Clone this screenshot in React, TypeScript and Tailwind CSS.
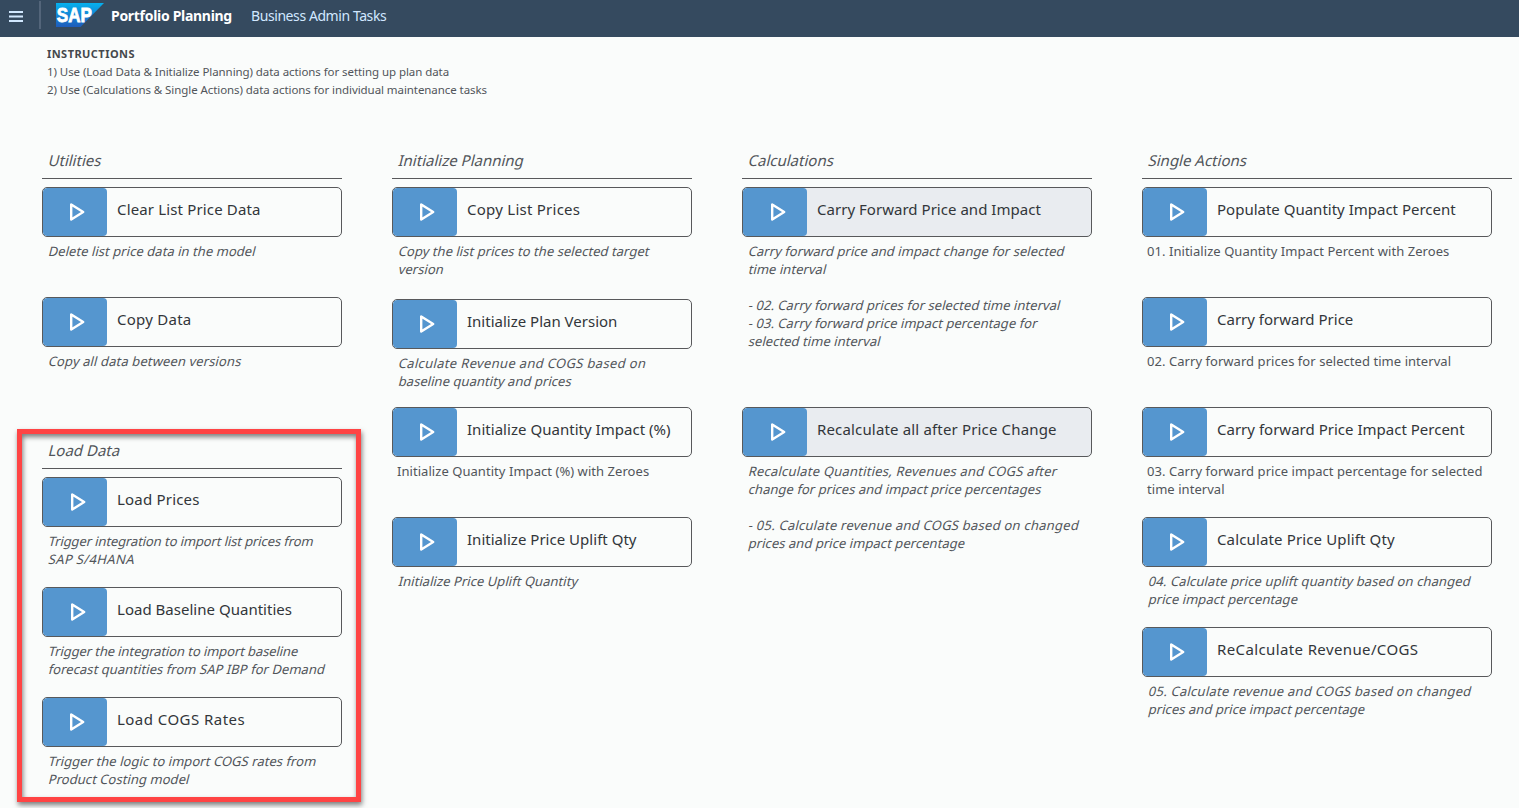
import React from "react";

type Line = string | { text: string; tracking: string };

type Action = {
  title: string;
  lines: Line[];
  height: string;
  tracking: string;
  upright?: boolean;
  active?: boolean;
  iconPad?: string;
};

const utilities: Action[] = [
  {
    title: "Clear List Price Data",
    lines: ["Delete list price data in the model"],
    height: "h-[110px]",
    tracking: "tracking-[0.15px]",
  },
  {
    title: "Copy Data",
    lines: [{ text: "Copy all data between versions", tracking: "tracking-[0.12px]" }],
    height: "h-[110px]",
    tracking: "tracking-[0.25px]",
  },
];

const loadData: Action[] = [
  {
    title: "Load Prices",
    lines: [
      { text: "Trigger integration to import list prices from", tracking: "tracking-[-0.11px]" },
      { text: "SAP S/4HANA", tracking: "tracking-[0.35px]" },
    ],
    height: "h-[110px]",
    tracking: "tracking-[0.2px]",
    iconPad: "pl-1.5",
  },
  {
    title: "Load Baseline Quantities",
    lines: [
      { text: "Trigger the integration to import baseline", tracking: "tracking-[-0.1px]" },
      "forecast quantities from SAP IBP for Demand",
    ],
    height: "h-[110px]",
    tracking: "tracking-[0.02px]",
    iconPad: "pl-1.5",
  },
  {
    title: "Load COGS Rates",
    lines: ["Trigger the logic to import COGS rates from", "Product Costing model"],
    height: "h-[110px]",
    tracking: "tracking-[0.46px]",
  },
];

const initialize: Action[] = [
  {
    title: "Copy List Prices",
    lines: ["Copy the list prices to the selected target", "version"],
    height: "h-[112px]",
    tracking: "tracking-[0.25px]",
  },
  {
    title: "Initialize Plan Version",
    lines: [
      { text: "Calculate Revenue and COGS based on", tracking: "tracking-[0.33px]" },
      "baseline quantity and prices",
    ],
    height: "h-[108px]",
    tracking: "tracking-[0px]",
  },
  {
    title: "Initialize Quantity Impact (%)",
    lines: ["Initialize Quantity Impact (%) with Zeroes"],
    height: "h-[110px]",
    tracking: "tracking-[0.03px]",
    upright: true,
  },
  {
    title: "Initialize Price Uplift Qty",
    lines: ["Initialize Price Uplift Quantity"],
    height: "h-[110px]",
    tracking: "tracking-[0.02px]",
  },
];

const calculations: Action[] = [
  {
    title: "Carry Forward Price and Impact",
    lines: [
      "Carry forward price and impact change for selected",
      "time interval",
      "",
      "- 02. Carry forward prices for selected time interval",
      "- 03. Carry forward price impact percentage for",
      "selected time interval",
    ],
    height: "h-[220px]",
    tracking: "tracking-[0.03px]",
    active: true,
    iconPad: "pl-1.5",
  },
  {
    title: "Recalculate all after Price Change",
    lines: [
      { text: "Recalculate Quantities, Revenues and COGS after", tracking: "tracking-[0.21px]" },
      "change for prices and impact price percentages",
      "",
      { text: "- 05. Calculate revenue and COGS based on changed", tracking: "tracking-[0.24px]" },
      { text: "prices and price impact percentage", tracking: "tracking-[0.05px]" },
    ],
    height: "h-[220px]",
    tracking: "tracking-[0.16px]",
    active: true,
    iconPad: "pl-1.5",
  },
];

const single: Action[] = [
  {
    title: "Populate Quantity Impact Percent",
    lines: ["01. Initialize Quantity Impact Percent with Zeroes"],
    height: "h-[110px]",
    tracking: "tracking-[0px]",
    upright: true,
  },
  {
    title: "Carry forward Price",
    lines: ["02. Carry forward prices for selected time interval"],
    height: "h-[110px]",
    tracking: "tracking-[0px]",
    upright: true,
  },
  {
    title: "Carry forward Price Impact Percent",
    lines: ["03. Carry forward price impact percentage for selected", "time interval"],
    height: "h-[110px]",
    tracking: "tracking-[0.01px]",
    upright: true,
  },
  {
    title: "Calculate Price Uplift Qty",
    lines: [
      { text: "04. Calculate price uplift quantity based on changed", tracking: "tracking-[0.11px]" },
      "price impact percentage",
    ],
    height: "h-[110px]",
    tracking: "tracking-[0.14px]",
  },
  {
    title: "ReCalculate Revenue/COGS",
    lines: [
      { text: "05. Calculate revenue and COGS based on changed", tracking: "tracking-[0.25px]" },
      "prices and price impact percentage",
    ],
    height: "h-[110px]",
    tracking: "tracking-[0.38px]",
  },
];

function PlayIcon() {
  return (
    <svg width="18" height="20" viewBox="0 0 18 20" fill="none" stroke="#fff" strokeWidth="2.4" strokeLinejoin="round">
      <path d="M3.2 2.4 V17.6 L15.2 10 Z" />
    </svg>
  );
}

function ActionItem({ action }: { action: Action }) {
  return (
    <div className={action.height}>
      <button
        className={`flex h-[50px] w-full overflow-hidden rounded-[5px] border border-[#58595b] text-left ${
          action.active ? "bg-[#e9ecf0]" : "bg-[#fafcfb]"
        }`}
      >
        <span
          className={`flex h-full w-16 shrink-0 items-center justify-center rounded-[4px] bg-[#5596cf] ${
            action.iconPad ?? "pl-1"
          }`}
        >
          <PlayIcon />
        </span>
        <span
          className={`whitespace-nowrap pl-2.5 pt-2.5 text-[15px] leading-[22px] text-[#32363a] ${action.tracking}`}
        >
          {action.title}
        </span>
      </button>
      <div className={`pt-[5px] text-[13px] leading-[18px] text-[#51555a] ${action.upright ? "pl-[5px]" : "pl-[6.5px]"}`}>
        {action.lines.map((line, i) => {
          const text = typeof line === "string" ? line : line.text;
          const tracking = typeof line === "string" ? "tracking-[0.05px]" : line.tracking;
          return (
            <p
              key={i}
              className={`h-[18px] whitespace-nowrap ${tracking} ${
                action.upright ? "" : "origin-left -skew-x-[14deg]"
              }`}
            >
              {text}
            </p>
          );
        })}
      </div>
    </div>
  );
}

function Section({ title, actions, wide }: { title: string; actions: Action[]; wide?: boolean }) {
  return (
    <section>
      <div className={`mb-2 h-[29px] border-b border-[#58595b] pl-[6.5px] ${wide ? "w-[370px]" : ""}`}>
        <h2 className="origin-left -skew-x-[14deg] whitespace-nowrap text-[15px] leading-[20px] text-[#51555a]">
          {title}
        </h2>
      </div>
      {actions.map((a) => (
        <ActionItem key={a.title} action={a} />
      ))}
    </section>
  );
}

function SapLogo() {
  return (
    <svg width="49" height="24" viewBox="0 0 49 24">
      <defs>
        <linearGradient id="sap" x1="0" y1="0" x2="0" y2="1">
          <stop offset="0" stopColor="#05b1ee" />
          <stop offset="0.5" stopColor="#1385d5" />
          <stop offset="1" stopColor="#1f5cbb" />
        </linearGradient>
      </defs>
      <path d="M0 0H48L24.5 24H0Z" fill="url(#sap)" />
      <text
        x="0.8"
        y="18.8"
        fill="#fff"
        stroke="#fff"
        strokeWidth="0.8"
        textLength="35"
        lengthAdjust="spacingAndGlyphs"
        className="font-['Liberation_Sans',sans-serif] text-[19.5px] font-bold"
      >
        SAP
      </text>
    </svg>
  );
}

export default function App() {
  return (
    <div className="relative h-[808px] w-[1519px] overflow-hidden bg-[#fafcfb] font-['Noto_Sans',sans-serif]">
      <header className="flex h-[37px] items-start bg-[#354a5f]">
        <svg width="14" height="12" viewBox="0 0 14 12" className="ml-[9px] mt-[10px]" stroke="#d1e8ff" strokeWidth="2">
          <path d="M0 2H14M0 6.5H14M0 11H14" />
        </svg>
        <div className="ml-4 mt-px h-7 w-0.5 bg-[#53657a]" />
        <div className="ml-[15px] mt-[3px]">
          <SapLogo />
        </div>
        <span className="ml-1.5 mt-[5px] w-[140px] whitespace-nowrap text-[14px] font-bold leading-[22px] tracking-[-0.3px] text-white">
          Portfolio Planning
        </span>
        <span className="mt-[5px] whitespace-nowrap text-[14px] leading-[22px] tracking-[-0.42px] text-[#d1e8ff]">
          Business Admin Tasks
        </span>
      </header>
      <div className="h-[113px] pl-[47px] pt-2 text-[11.5px] leading-[18px] tracking-[-0.07px] text-[#51555a]">
        <p className="text-[11px] font-bold tracking-[0.45px] text-[#45484c]">INSTRUCTIONS</p>
        <p>1) Use (Load Data &amp; Initialize Planning) data actions for setting up plan data</p>
        <p>2) Use (Calculations &amp; Single Actions) data actions for individual maintenance tasks</p>
      </div>
      <main className="grid grid-cols-[300px_300px_350px_350px] gap-x-[50px] pl-[42px]">
        <div className="flex flex-col gap-[33px]">
          <Section title="Utilities" actions={utilities} />
          <Section title="Load Data" actions={loadData} />
        </div>
        <Section title="Initialize Planning" actions={initialize} />
        <Section title="Calculations" actions={calculations} />
        <Section title="Single Actions" actions={single} wide />
      </main>
      <div className="pointer-events-none absolute left-[17px] top-[429px] h-[373px] w-[344px] border-[5px] border-[#ff4444] shadow-[1px_3px_5px_rgba(0,0,0,0.5),inset_1px_3px_5px_rgba(0,0,0,0.5)]" />
    </div>
  );
}
